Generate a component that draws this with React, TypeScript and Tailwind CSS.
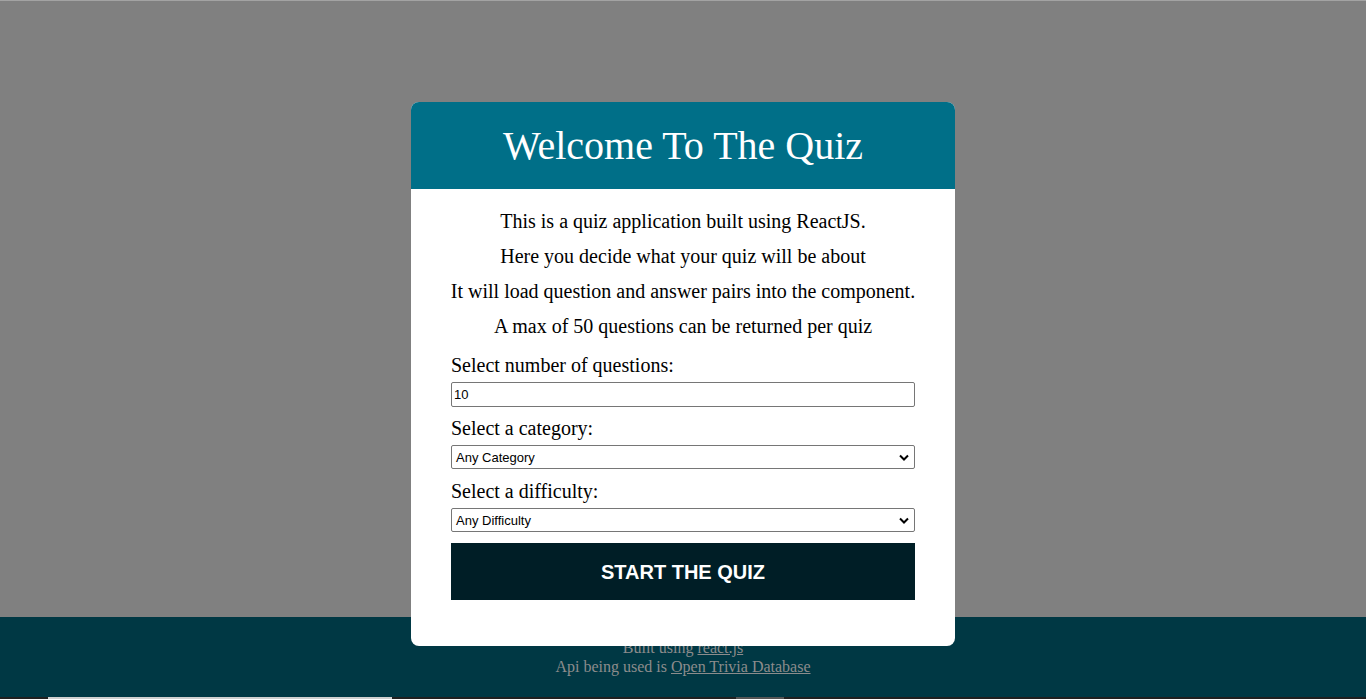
import React from 'react';

const serif = { fontFamily: '"Liberation Serif", "Times New Roman", serif' };

const App: React.FC = () => {
  return (
    <div className="relative h-[699px] flex flex-col overflow-hidden font-['Liberation_Serif',serif]">
      {/* backdrop area */}
      <div className="h-px bg-[#a3a3a3]"></div>
      <div className="flex-1 bg-[#808080]"></div>

      {/* Footer */}
      <footer className="h-[80px] bg-[#003844] text-center text-[16px] leading-[19px] text-[#8c8c8c] pt-[21px]">
        <p>
          Built using <a className="underline">react.js</a>
        </p>
        <p>
          Api being used is <a className="underline">Open Trivia Database</a>
        </p>
      </footer>
      <div className="h-[2px] bg-[#202020] flex">
        <div className="ml-[48px] w-[344px] bg-[#d0d0d0]"></div>
        <div className="ml-[344px] w-[48px] bg-[#555555]"></div>
      </div>

      {/* Modal */}
      <div className="absolute left-1/2 -translate-x-1/2 top-[102px] w-[544px] bg-white rounded-[8px] overflow-hidden" style={serif}>
        <div className="h-[87px] bg-[#006f88] flex items-center justify-center">
          <h1 className="text-[40px] text-white leading-none">Welcome To The Quiz</h1>
        </div>
        <div className="px-[40px] pt-[21px] pb-[46px] text-black">
          <div className="text-center text-[20px] leading-[23px] space-y-[12px]">
            <p>This is a quiz application built using ReactJS.</p>
            <p>Here you decide what your quiz will be about</p>
            <p className="whitespace-nowrap -mx-[10px]">It will load question and answer pairs into the component.</p>
            <p>A max of 50 questions can be returned per quiz</p>
          </div>
          <div className="mt-[16px] text-[20px] leading-[23px]">
            <label className="block">Select number of questions:</label>
            <input
              type="number"
              defaultValue={10}
              className="mt-[5px] block w-full h-[25px] border border-[#767676] rounded-[2px] px-[2px] text-[13px] font-['Liberation_Sans',Arial,sans-serif] outline-none"
            />
            <label className="block mt-[10px]">Select a category:</label>
            <div className="mt-[5px] relative h-[24px] border border-[#767676] rounded-[2px] flex items-center px-[4px] text-[13px] font-['Liberation_Sans',Arial,sans-serif]">
              <span className="flex-1">Any Category</span>
              <svg width="10" height="7" viewBox="0 0 10 7" className="mr-[1px]">
                <path d="M1 1.5 L5 5.5 L9 1.5" stroke="#000" strokeWidth="2" fill="none" />
              </svg>
            </div>
            <label className="block mt-[11px]">Select a difficulty:</label>
            <div className="mt-[5px] relative h-[24px] border border-[#767676] rounded-[2px] flex items-center px-[4px] text-[13px] font-['Liberation_Sans',Arial,sans-serif]">
              <span className="flex-1">Any Difficulty</span>
              <svg width="10" height="7" viewBox="0 0 10 7" className="mr-[1px]">
                <path d="M1 1.5 L5 5.5 L9 1.5" stroke="#000" strokeWidth="2" fill="none" />
              </svg>
            </div>
          </div>
          <button className="mt-[11px] w-full h-[57px] bg-[#001e26] text-white text-[20px] font-bold font-['Liberation_Sans',Arial,sans-serif]">
            START THE QUIZ
          </button>
        </div>
      </div>
    </div>
  );
};

export default App;
